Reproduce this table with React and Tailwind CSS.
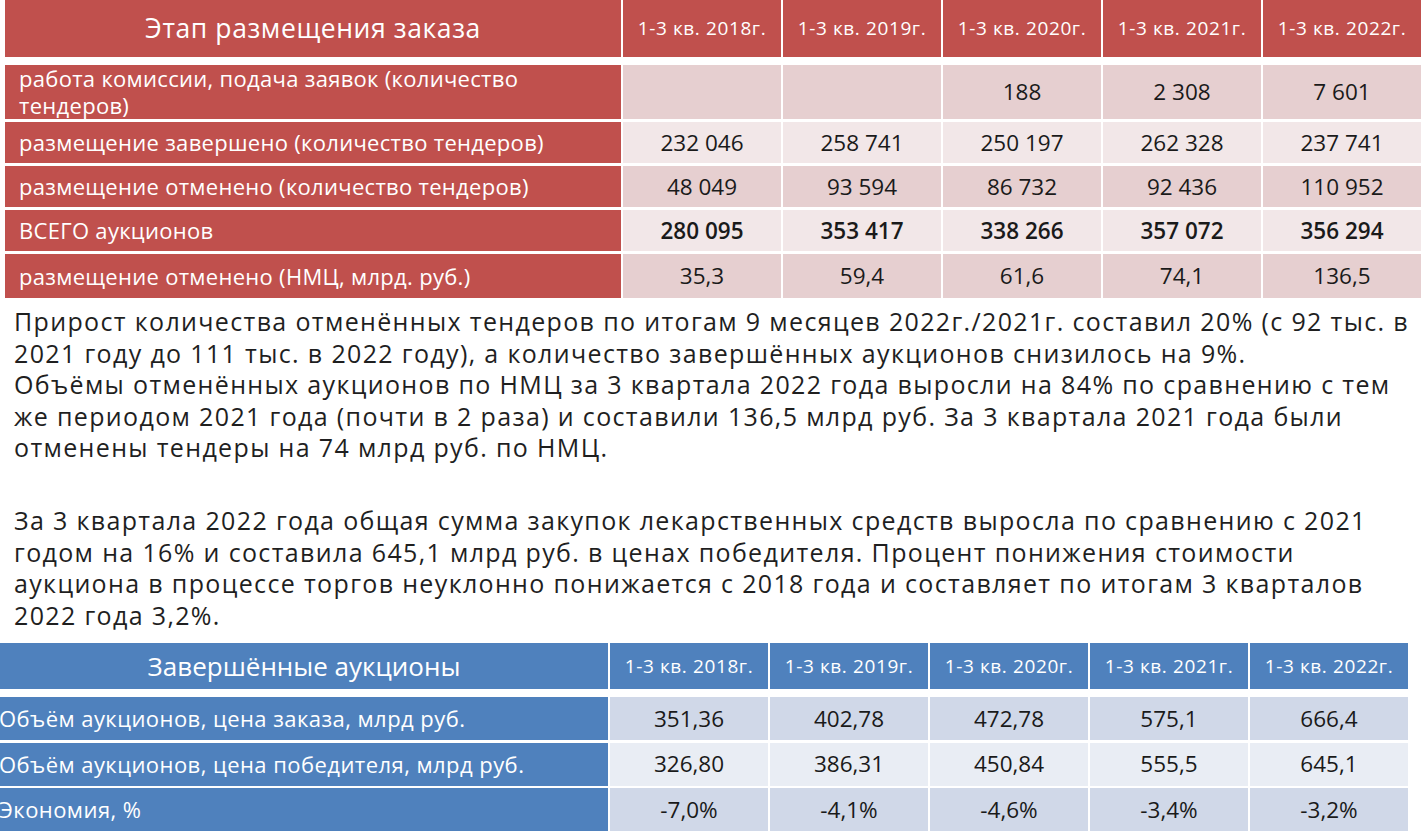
import React from 'react';

const years = ['1-3 кв. 2018г.', '1-3 кв. 2019г.', '1-3 кв. 2020г.', '1-3 кв. 2021г.', '1-3 кв. 2022г.'];

const redRows = [
    { label: ['работа комиссии, подача заявок (количество', 'тендеров)'], values: ['', '', '188', '2 308', '7 601'], h: 'h-[54px]', dark: true },
    { label: ['размещение завершено (количество тендеров)'], values: ['232 046', '258 741', '250 197', '262 328', '237 741'], h: 'h-[41px]', dark: false },
    { label: ['размещение отменено (количество тендеров)'], values: ['48 049', '93 594', '86 732', '92 436', '110 952'], h: 'h-[41px]', dark: true },
    { label: ['ВСЕГО аукционов'], values: ['280 095', '353 417', '338 266', '357 072', '356 294'], h: 'h-[41px]', dark: false, bold: true },
    { label: ['размещение отменено (НМЦ, млрд. руб.)'], values: ['35,3', '59,4', '61,6', '74,1', '136,5'], h: 'h-[44px]', dark: true },
];

const blueRows = [
    { label: 'Объём аукционов, цена заказа, млрд руб.', values: ['351,36', '402,78', '472,78', '575,1', '666,4'], dark: true },
    { label: 'Объём аукционов, цена победителя, млрд руб.', values: ['326,80', '386,31', '450,84', '555,5', '645,1'], dark: false },
    { label: 'Экономия, %', values: ['-7,0%', '-4,1%', '-4,6%', '-3,4%', '-3,2%'], dark: true },
];

const para1 = [
    'Прирост количества отменённых тендеров по итогам 9 месяцев 2022г./2021г. составил 20% (с 92 тыс. в',
    '2021 году до 111 тыс. в 2022 году), а количество завершённых аукционов снизилось на 9%.',
    'Объёмы отменённых аукционов по НМЦ за 3 квартала 2022 года выросли на 84% по сравнению с тем',
    'же периодом 2021 года (почти в 2 раза) и составили 136,5 млрд руб. За 3 квартала 2021 года были',
    'отменены тендеры на 74 млрд руб. по НМЦ.',
];

const para2 = [
    'За 3 квартала 2022 года общая сумма закупок лекарственных средств выросла по сравнению с 2021',
    'годом на 16% и составила 645,1 млрд руб. в ценах победителя. Процент понижения стоимости',
    'аукциона в процессе торгов неуклонно понижается с 2018 года и составляет по итогам 3 кварталов',
    '2022 года 3,2%.',
];

const RedTable = () => (
    <div className="ml-[5px] w-[1416px]">
        <div className="grid grid-cols-[616px_repeat(5,158px)] gap-x-[2px] h-[57px]">
            <div className="bg-[#c0504d] flex items-center justify-center text-white text-[26.5px] tracking-[0.6px]">
                Этап размещения заказа
            </div>
            {years.map((y) => (
                <div key={y} className="bg-[#c0504d] flex items-center justify-center text-white text-[19px] tracking-[0.6px]">
                    {y}
                </div>
            ))}
        </div>
        <div className="mt-[8px] flex flex-col gap-y-[3px]">
            {redRows.map((row, i) => (
                <div key={i} className={`grid grid-cols-[616px_repeat(5,158px)] gap-x-[2px] ${row.h}`}>
                    <div className="bg-[#c0504d] flex flex-col justify-center pl-[14px] text-white text-[22px] tracking-[0.3px] leading-[27px]">
                        {row.label.map((l) => (
                            <span key={l} className="whitespace-nowrap">{l}</span>
                        ))}
                    </div>
                    {row.values.map((v, j) => (
                        <div
                            key={j}
                            className={`flex items-center justify-center text-[22.5px] text-[#1a1a1a] ${row.dark ? 'bg-[#e6cfd0]' : 'bg-[#f2e7e8]'} ${row.bold ? 'font-semibold' : ''}`}
                        >
                            {v}
                        </div>
                    ))}
                </div>
            ))}
        </div>
    </div>
);

const BlueTable = () => (
    <div className="w-[1411px]">
        <div className="grid grid-cols-[608px_repeat(5,158px)] gap-x-[2px] h-[46px]">
            <div className="bg-[#4f81bd] flex items-center justify-center text-white text-[26px]">
                Завершённые аукционы
            </div>
            {years.map((y) => (
                <div key={y} className="bg-[#4f81bd] flex items-center justify-center text-white text-[19px] tracking-[0.6px]">
                    {y}
                </div>
            ))}
        </div>
        <div className="mt-[8px] flex flex-col gap-y-[2.5px]">
            {blueRows.map((row, i) => (
                <div key={i} className="grid grid-cols-[608px_repeat(5,158px)] gap-x-[2px] h-[43px]">
                    <div className="bg-[#4f81bd] flex items-center text-white text-[22px] tracking-[0.45px] whitespace-nowrap -indent-[1px]">
                        {row.label}
                    </div>
                    {row.values.map((v, j) => (
                        <div
                            key={j}
                            className={`flex items-center justify-center text-[22.5px] text-[#1a1a1a] ${row.dark ? 'bg-[#d0d8e8]' : 'bg-[#e9edf4]'}`}
                        >
                            {v}
                        </div>
                    ))}
                </div>
            ))}
        </div>
    </div>
);

export default function App() {
    return (
        <div className="w-[1421px] h-[836px] bg-white overflow-hidden font-['Open_Sans',sans-serif]">
            <RedTable />
            {/* commentary text */}
            <div className="pl-[14px] mt-[8px] text-[25px] tracking-[1.35px] leading-[31.5px] text-[#1f1f1f]">
                {para1.map((l) => (
                    <div key={l} className="whitespace-nowrap">{l}</div>
                ))}
                <div className="mt-[41.5px]">
                    {para2.map((l) => (
                        <div key={l} className="whitespace-nowrap">{l}</div>
                    ))}
                </div>
            </div>
            <div className="mt-[12px]">
                <BlueTable />
            </div>
        </div>
    );
}
